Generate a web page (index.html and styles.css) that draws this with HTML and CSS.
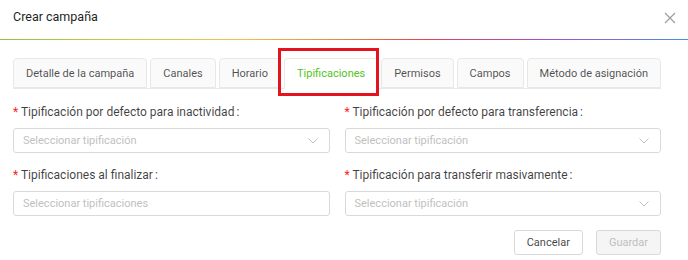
FILE: index.html
```html
<!DOCTYPE html>
<html lang="es">
<head>
  <meta charset="UTF-8">
  <title>Crear campaña</title>
  <link rel="stylesheet" href="styles.css">
</head>
<body>
  <div class="modal">
    <header class="modal-header">
      <span class="modal-title">Crear campaña</span>
      <span class="modal-close">
        <svg width="12" height="12" viewBox="0 0 12 12"><path d="M1 1 L11 11 M11 1 L1 11" stroke="#9a9a9a" stroke-width="1.1" fill="none"/></svg>
      </span>
    </header>
    <div class="rainbow"></div>

    <div class="modal-body">
      <nav class="tabs">
        <a class="tab">Detalle de la campaña</a>
        <a class="tab">Canales</a>
        <a class="tab">Horario</a>
        <a class="tab active">Tipificaciones<span class="highlight"></span></a>
        <a class="tab">Permisos</a>
        <a class="tab">Campos</a>
        <a class="tab">Método de asignación</a>
      </nav>

      <form class="form-grid">
        <div class="form-item">
          <label><span class="req">*</span> Tipificación por defecto para inactividad<span class="colon">:</span></label>
          <div class="select">
            <span class="placeholder">Seleccionar tipificación</span>
            <svg class="arrow" width="10" height="6" viewBox="0 0 10 6"><path d="M0.5 0.5 L5 5 L9.5 0.5" stroke="#bfbfbf" fill="none"/></svg>
          </div>
        </div>
        <div class="form-item">
          <label><span class="req">*</span> Tipificación por defecto para transferencia<span class="colon">:</span></label>
          <div class="select">
            <span class="placeholder">Seleccionar tipificación</span>
            <svg class="arrow" width="10" height="6" viewBox="0 0 10 6"><path d="M0.5 0.5 L5 5 L9.5 0.5" stroke="#bfbfbf" fill="none"/></svg>
          </div>
        </div>
        <div class="form-item">
          <label><span class="req">*</span> Tipificaciones al finalizar<span class="colon">:</span></label>
          <div class="select">
            <span class="placeholder">Seleccionar tipificaciones</span>
          </div>
        </div>
        <div class="form-item">
          <label><span class="req">*</span> Tipificación para transferir masivamente<span class="colon">:</span></label>
          <div class="select">
            <span class="placeholder">Seleccionar tipificación</span>
            <svg class="arrow" width="10" height="6" viewBox="0 0 10 6"><path d="M0.5 0.5 L5 5 L9.5 0.5" stroke="#bfbfbf" fill="none"/></svg>
          </div>
        </div>
      </form>

      <div class="footer">
        <button class="btn">Cancelar</button>
        <button class="btn disabled" disabled>Guardar</button>
      </div>
    </div>
  </div>
</body>
</html>
```

FILE: styles.css
```css
body {
  margin: 0;
  background: #fff;
  font-family: Roboto, "Liberation Sans", sans-serif;
  color: rgba(0, 0, 0, 0.65);
}

.modal {
  width: 688px;
  height: 260px;
  overflow: hidden;
}

.modal-header {
  height: 39px;
  display: flex;
  align-items: center;
  justify-content: space-between;
  padding: 0 12px 0 13px;
  box-sizing: border-box;
}

.modal-title {
  font-size: 12.5px;
  color: #1f1f1f;
  margin-top: -6px;
}

.modal-close {
  display: flex;
  margin-top: -4px;
}

.rainbow {
  height: 1px;
  background: linear-gradient(to right, #8cc63f, #c9cf45 20%, #f4c04a 35%, #f08a3c 48%, #e8414e 62%, #a14fd0 80%, #4a8fe3);
}

.modal-body {
  padding: 18px 27px 0 13px;
}

.tabs {
  display: flex;
  gap: 3px;
  border-bottom: 1px solid #e8e8e8;
  height: 30px;
}

.tab {
  position: relative;
  flex-shrink: 0;
  display: flex;
  align-items: center;
  padding: 0 12px;
  height: 30px;
  box-sizing: border-box;
  border: 1px solid #e8e8e8;
  border-radius: 4px 4px 0 0;
  background: #fafafa;
  font-size: 11px;
  white-space: nowrap;
  color: rgba(0, 0, 0, 0.7);
}

.tab.active {
  background: #fff;
  color: #52c41a;
  border-bottom-color: #fff;
  height: 31px;
}

.highlight {
  position: absolute;
  left: -7px;
  right: -2px;
  top: -11px;
  bottom: -8px;
  border: 3px solid #e3141d;
}

.form-grid {
  margin: 0;
  padding-top: 15px;
  display: grid;
  grid-template-columns: 1fr 1fr;
  column-gap: 15px;
  row-gap: 14px;
}

.form-item label {
  display: block;
  font-size: 12px;
  height: 16px;
  line-height: 16px;
  margin-bottom: 8px;
  color: rgba(0, 0, 0, 0.75);
}

.req {
  color: #f5222d;
  font-size: 12px;
}

.colon {
  margin-left: 2px;
}

.select {
  height: 25px;
  box-sizing: border-box;
  border: 1px solid #d9d9d9;
  border-radius: 3px;
  display: flex;
  align-items: center;
  justify-content: space-between;
  padding: 0 11px 0 9px;
}

.placeholder {
  font-size: 11px;
  color: #bfbfbf;
}

.footer {
  display: flex;
  justify-content: flex-end;
  gap: 13px;
  margin-top: 14px;
}

.btn {
  font-family: inherit;
  font-size: 11px;
  height: 25px;
  padding: 0 12px;
  background: #fff;
  border: 1px solid #d9d9d9;
  border-radius: 3px;
  color: rgba(0, 0, 0, 0.75);
}

.btn.disabled {
  background: #f5f5f5;
  color: #bfbfbf;
}
```
